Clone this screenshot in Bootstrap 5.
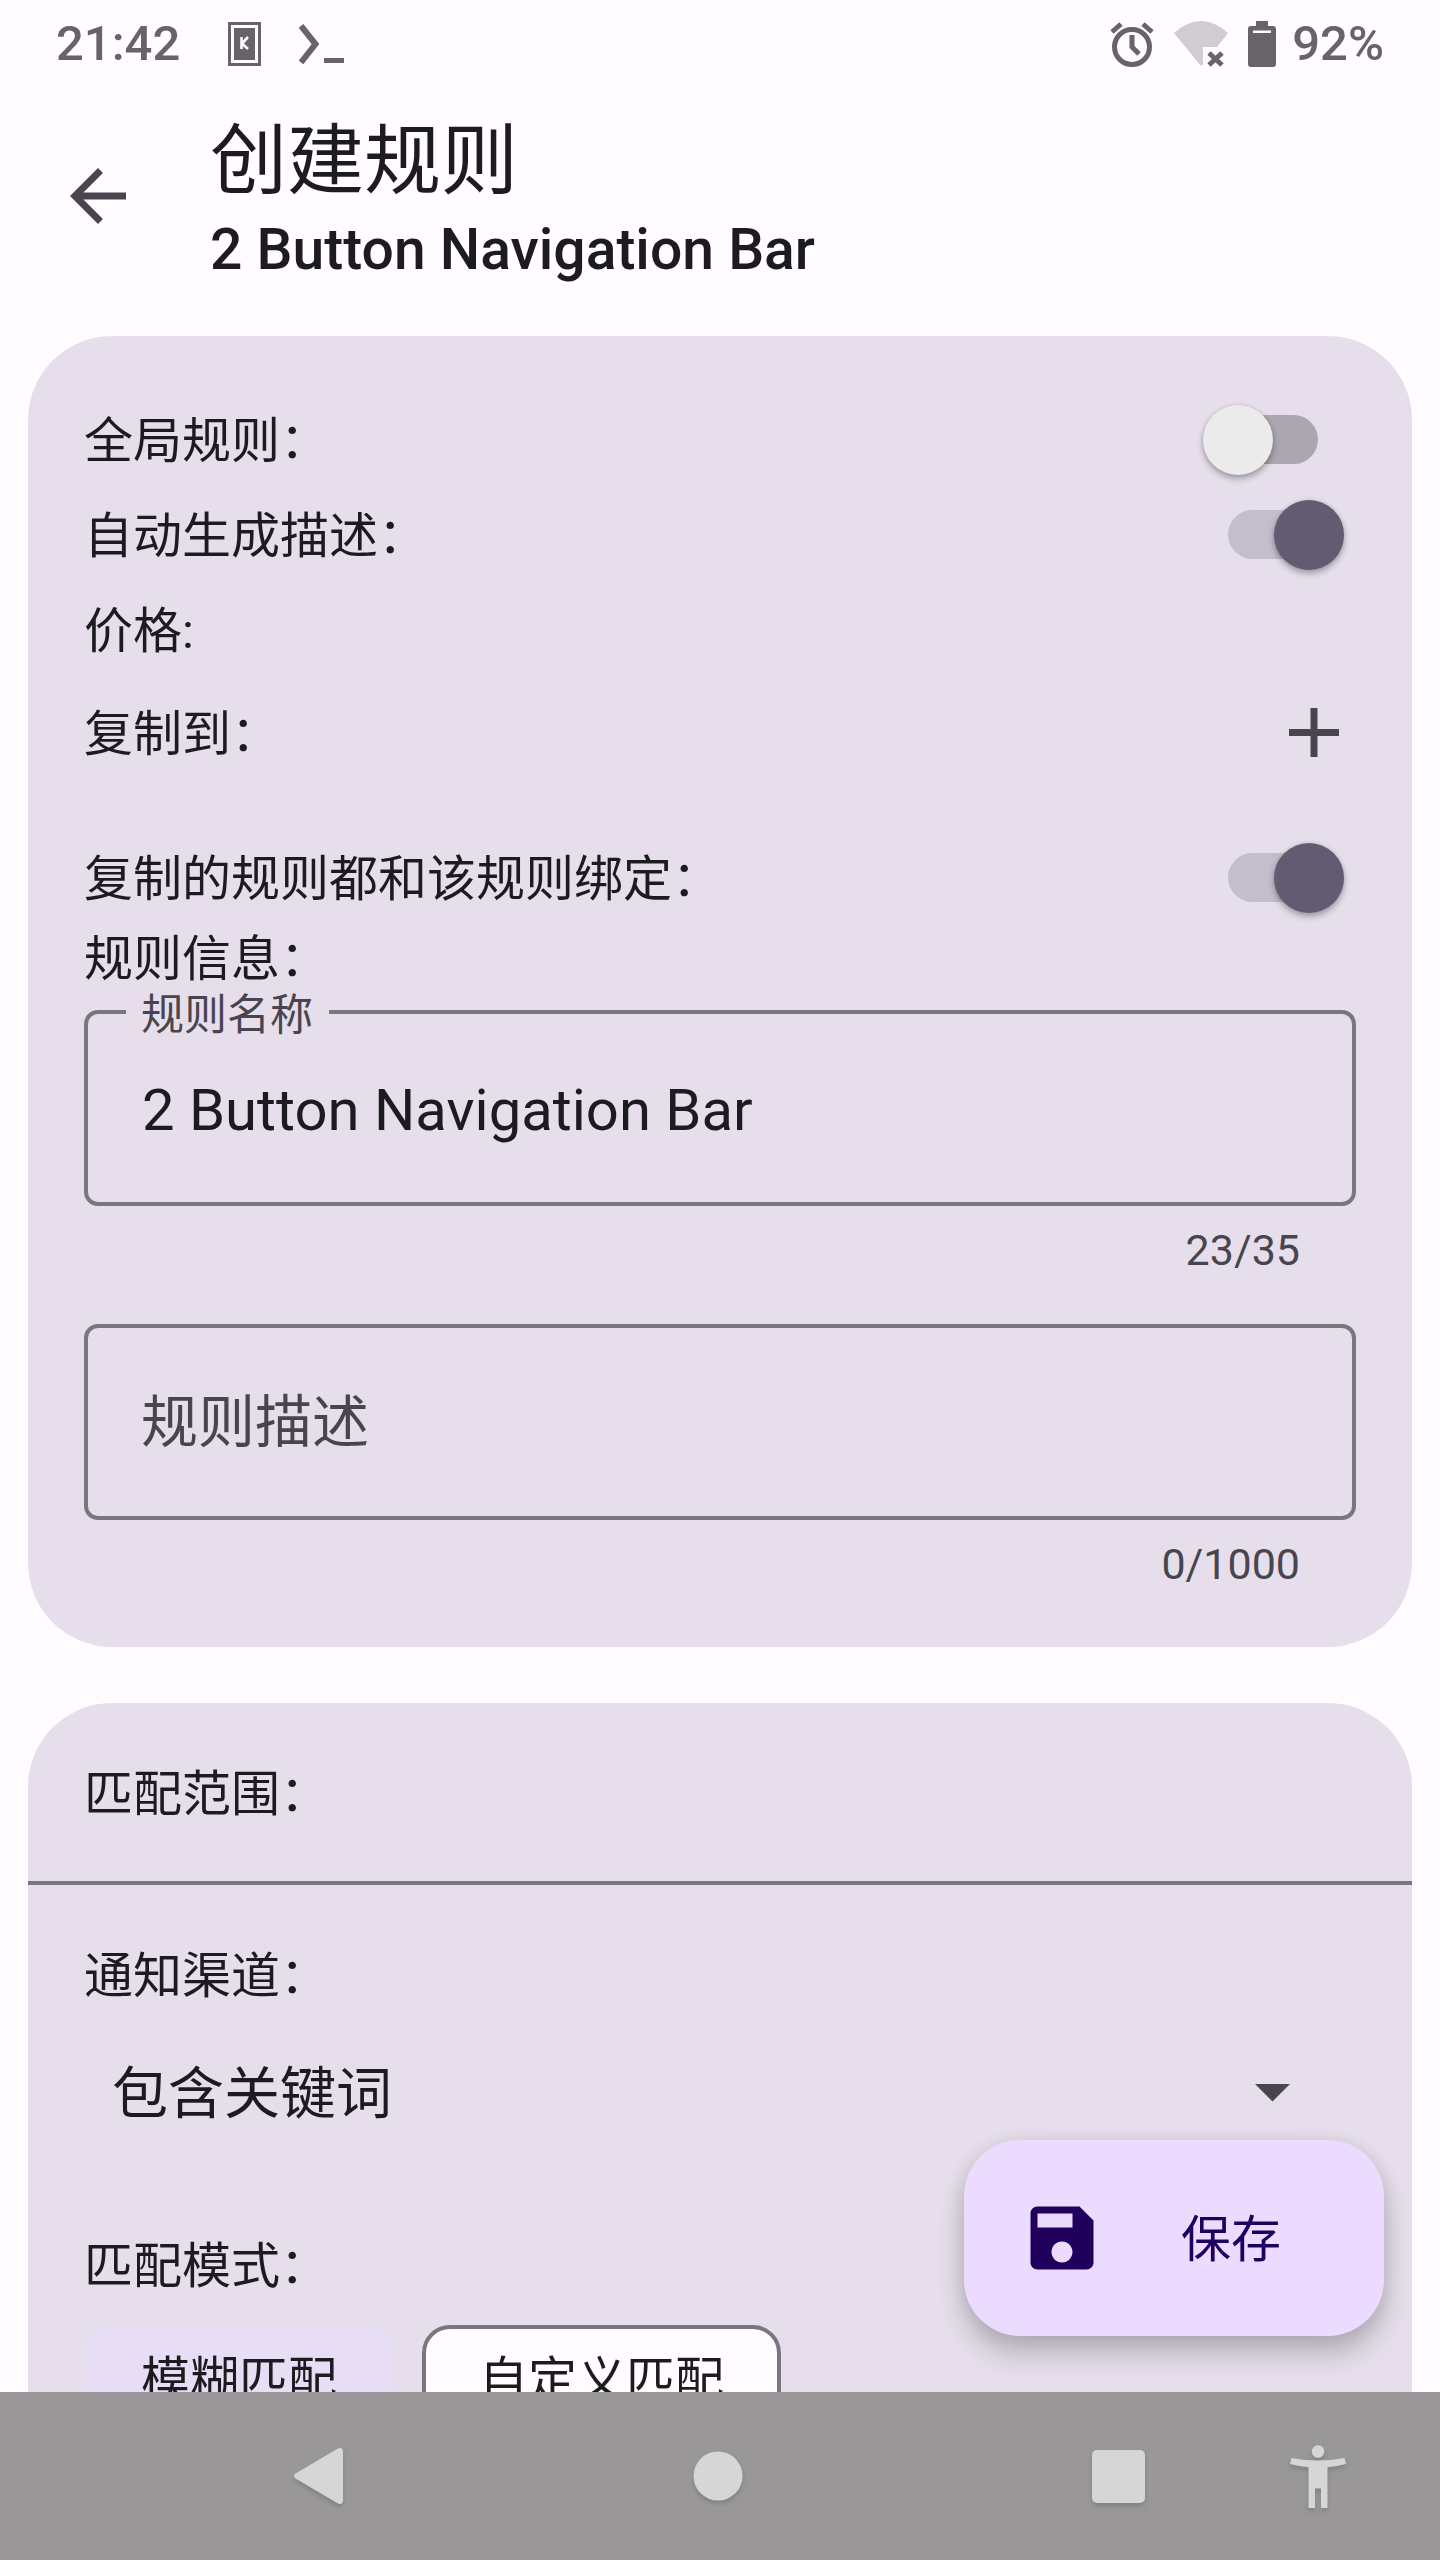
<!DOCTYPE html>
<html lang="zh-CN">
<head>
<meta charset="utf-8">
<meta name="viewport" content="width=device-width, initial-scale=1">
<title>创建规则</title>
<link href="https://cdn.jsdelivr.net/npm/bootstrap@5.3.0/dist/css/bootstrap.min.css" rel="stylesheet">
<style>
:root{--surface:#fffbff;--panel:#e6dfeb;--ink:#1c1b1f;--muted:#49454e;--outline:#7a757f;--status:#676468}
body{font-family:Roboto,"Noto Sans CJK SC",sans-serif;font-size:49px;line-height:66px;color:var(--ink);background:var(--surface)}
svg{display:block;flex:none}
.statusbar{height:88px;padding:0 56px;color:var(--status);font-weight:500}
.status-icons{gap:38px;margin-left:48px}
.status-right{gap:20px}
.appbar{height:248px;padding:28px 56px 0;gap:70px}
.appbar .icon-btn{margin-top:38px}
.icon-btn{padding:0;border:0;background:none;color:var(--muted)}
.app-title{font-size:77px;line-height:92px;font-weight:400}
.app-sub{font-size:57px;line-height:84px;font-weight:500}
.page-body{padding:0 28px;gap:56px}
.panel{background:var(--panel);border-radius:84px}
.panel-form{padding:56px 56px 53px}
.setting{min-height:95px}
.setting label,.setting span,.save span{padding-top:4px}
.setting-tall{min-height:111px;margin-bottom:42px}
.setting .form-check-input.toggle{width:90px;height:49px;margin:0 38px 0 0;padding:0;border:0;border-radius:25px;background:#aca6b1;position:relative;box-shadow:none;flex:none}
.toggle::before{content:"";position:absolute;top:-10px;left:-25px;width:70px;height:70px;border-radius:50%;background:#ebebeb;box-shadow:0 4px 6px rgba(0,0,0,.28),0 0 4px rgba(0,0,0,.12)}
.setting .form-check-input.toggle:checked{background:#c4becc}
.toggle:checked::before{left:46px;background:#625b71}
.info-title{padding-top:2px}
.field{position:relative}
.field-first{margin-top:17px}
.field-next{margin-top:44px}
.field .form-control{height:196px;padding:4px 54px 0;border:4px solid var(--outline);border-radius:14px;background:transparent;font-size:58px;line-height:84px;color:var(--ink);box-shadow:none}
.field-next .form-control{padding:0 53px;font-size:57px}
.field .form-control::placeholder{color:var(--muted);opacity:1}
.field-tag{position:absolute;left:42px;top:-25px;padding:0 16px 0 15px;font-size:43px;line-height:60px;color:var(--muted);background:var(--panel)}
.counter{margin-top:14px;padding-right:56px;font-size:43px;line-height:60px;color:var(--muted)}
.panel-head{padding:59px 56px 53px;border-bottom:4px solid var(--outline)}
.panel-main{padding:59px 56px}
.picker{position:relative;margin-bottom:56px}
.picker .form-select{height:168px;padding:0 112px 0 28px;border:0;background:none;font-size:56px;line-height:84px;color:var(--ink);box-shadow:none}
.picker svg{position:absolute;right:66px;top:74px;pointer-events:none}
.chips{gap:28px;margin-top:25px}
.chips .btn{height:112px;padding:0 53px;border:4px solid var(--outline);border-radius:28px;background:var(--surface);color:var(--ink);font-size:49px;line-height:104px}
.chips .btn-check:checked+.btn{background:#e7def6;border-color:#e7def6;color:var(--ink)}
.save{position:absolute;right:56px;bottom:56px;height:196px;padding:0 103px 0 56px;gap:77px;border:0;border-radius:56px;background:#ebdcff;color:#21005d;font-size:50px;box-shadow:0 18px 28px rgba(0,0,0,.2),0 2px 18px rgba(0,0,0,.1)}
.sysnav{height:168px;padding:0 22px 0 218px;background:#999797;color:#d6d6d6;z-index:2}
.sysnav svg{filter:drop-shadow(0 3px 2px rgba(0,0,0,.15));margin:0 auto}
.sysnav .icon-btn{width:200px;color:inherit}
</style>
<script src="https://cdn.jsdelivr.net/npm/bootstrap@5.3.0/dist/js/bootstrap.bundle.min.js"></script>
</head>
<body class="d-flex flex-column vh-100 overflow-hidden">
<header class="flex-shrink-0">
  <div class="statusbar d-flex align-items-center justify-content-between">
    <div class="d-flex align-items-center">
      <span>21:42</span>
      <div class="status-icons d-flex align-items-center">
        <svg width="33" height="44" viewBox="0 0 33 44"><rect x="1.500" y="1.500" width="30" height="41" fill="none" stroke="currentColor" stroke-width="3"/><rect x="6" y="6" width="21" height="32" fill="currentColor"/><path d="M13.500 15v12M20 15l-6 6.500 6 5.500" fill="none" stroke="#fffbff" stroke-width="2.600"/></svg>
        <svg width="46" height="44" viewBox="0 0 46 44"><path d="M2 4l14.500 18L2 40.500" fill="none" stroke="currentColor" stroke-width="6"/><path d="M25 36h20v5H25z" fill="currentColor"/></svg>
      </div>
    </div>
    <div class="status-right d-flex align-items-center">
      <svg width="44" height="46" viewBox="0 0 44 46"><circle cx="22" cy="26" r="17.500" fill="none" stroke="currentColor" stroke-width="5"/><path d="M22 14v12l7 7M2 11L11 3M42 11L33 3" fill="none" stroke="currentColor" stroke-width="5"/></svg>
      <svg width="54" height="46" viewBox="0 0 54 46"><path d="M0 12Q27-12 54 12L43 26H29v17l-2 2z" fill="#d0cdd0"/><path d="M35 32l13 12M48 32L35 44" stroke="currentColor" stroke-width="5"/></svg>
      <div class="d-flex align-items-center gap-3">
        <svg width="28" height="46" viewBox="0 0 28 46"><path d="M8 0h12v5h5q3 0 3 3v35q0 3-3 3H3q-3 0-3-3V8q0-3 3-3h5z" fill="currentColor"/><path d="M5 9.500h18v2.500H5z" fill="#fffbff"/></svg>
        <span>92%</span>
      </div>
    </div>
  </div>
  <div class="appbar d-flex align-items-start">
    <button class="icon-btn" type="button" aria-label="返回"><svg width="84" height="84" viewBox="0 0 24 24"><path fill="currentColor" d="M20 11H7.830l5.590-5.590L12 4l-8 8 8 8 1.410-1.410L7.830 13H20v-2z"/></svg></button>
    <div>
      <h1 class="app-title m-0">创建规则</h1>
      <div class="app-sub">2 Button Navigation Bar</div>
    </div>
  </div>
</header>
<div class="flex-grow-1 position-relative overflow-hidden">
<main class="page-body d-flex flex-column">
  <section class="panel panel-form">
    <div class="setting d-flex align-items-center justify-content-between"><label for="global">全局规则：</label><input class="form-check-input toggle" type="checkbox" role="switch" id="global"></div>
    <div class="setting d-flex align-items-center justify-content-between"><label for="auto">自动生成描述：</label><input class="form-check-input toggle" type="checkbox" role="switch" id="auto" checked></div>
    <div class="setting d-flex align-items-center"><span>价格:</span></div>
    <div class="setting setting-tall d-flex align-items-center justify-content-between"><span>复制到：</span><button class="icon-btn" type="button" aria-label="添加"><svg width="84" height="84" viewBox="0 0 84 84"><path d="M17 41.500h50M42 17v49" stroke="currentColor" stroke-width="7"/></svg></button></div>
    <div class="setting d-flex align-items-center justify-content-between"><label for="bind">复制的规则都和该规则绑定：</label><input class="form-check-input toggle" type="checkbox" role="switch" id="bind" checked></div>
    <div class="info-title">规则信息：</div>
    <div class="field field-first">
      <input class="form-control" id="name" type="text" value="2 Button Navigation Bar">
      <label class="field-tag" for="name">规则名称</label>
    </div>
    <div class="counter text-end">23/35</div>
    <div class="field field-next">
      <input class="form-control" id="desc" type="text" placeholder="规则描述" aria-label="规则描述">
    </div>
    <div class="counter text-end">0/1000</div>
  </section>
  <section class="panel">
    <div class="panel-head">匹配范围：</div>
    <div class="panel-main">
      <label for="channel" class="d-block">通知渠道：</label>
      <div class="picker">
        <select class="form-select" id="channel"><option>包含关键词</option></select>
        <svg width="35" height="18" viewBox="0 0 35 18"><path d="M0 0h35L17.500 17.500z" fill="#49454e"/></svg>
      </div>
      <div id="mode">匹配模式：</div>
      <div class="chips d-flex" role="radiogroup" aria-labelledby="mode">
        <input class="btn-check" type="radio" name="mode" id="fuzzy" checked><label class="btn" for="fuzzy">模糊匹配</label>
        <input class="btn-check" type="radio" name="mode" id="custom"><label class="btn" for="custom">自定义匹配</label>
      </div>
    </div>
  </section>
</main>
<button class="save d-flex align-items-center" type="button"><svg width="84" height="84" viewBox="0 0 24 24"><path fill="currentColor" d="M17 3H5c-1.110 0-2 .9-2 2v14c0 1.100.89 2 2 2h14c1.100 0 2-.9 2-2V7l-4-4zm-5 16c-1.660 0-3-1.340-3-3s1.340-3 3-3 3 1.340 3 3-1.340 3-3 3zm3-10H5V5h10v4z"/></svg><span>保存</span></button>
</div>
<nav class="sysnav d-flex align-items-center justify-content-between flex-shrink-0" aria-label="系统导航">
  <button class="icon-btn" type="button" aria-label="后退"><svg width="52" height="58" viewBox="0 0 52 58"><path d="M3.500 26.500L46 1.500q4-2 5 2.500v50q-1 4.500-5 2.500L3.500 31.500q-3-2.500 0-5z" fill="currentColor"/></svg></button>
  <button class="icon-btn" type="button" aria-label="主页"><svg width="50" height="50" viewBox="0 0 50 50"><circle cx="25" cy="25" r="24.500" fill="currentColor"/></svg></button>
  <div class="d-flex align-items-center">
    <button class="icon-btn" type="button" aria-label="最近任务"><svg width="53" height="53" viewBox="0 0 53 53"><rect width="53" height="53" rx="5" fill="currentColor"/></svg></button>
    <button class="icon-btn" type="button" aria-label="无障碍"><svg width="56" height="63" viewBox="0 0 56 63"><circle cx="28" cy="6.500" r="6.300" fill="currentColor"/><path d="M1.500 13Q28 18 54.500 13l1.500 6q-9 2.500-18.500 3.200V63H31V43.500h-6V63h-6.500V22.200Q9 21.500 0 19z" fill="currentColor"/></svg></button>
  </div>
</nav>
</body>
</html>
